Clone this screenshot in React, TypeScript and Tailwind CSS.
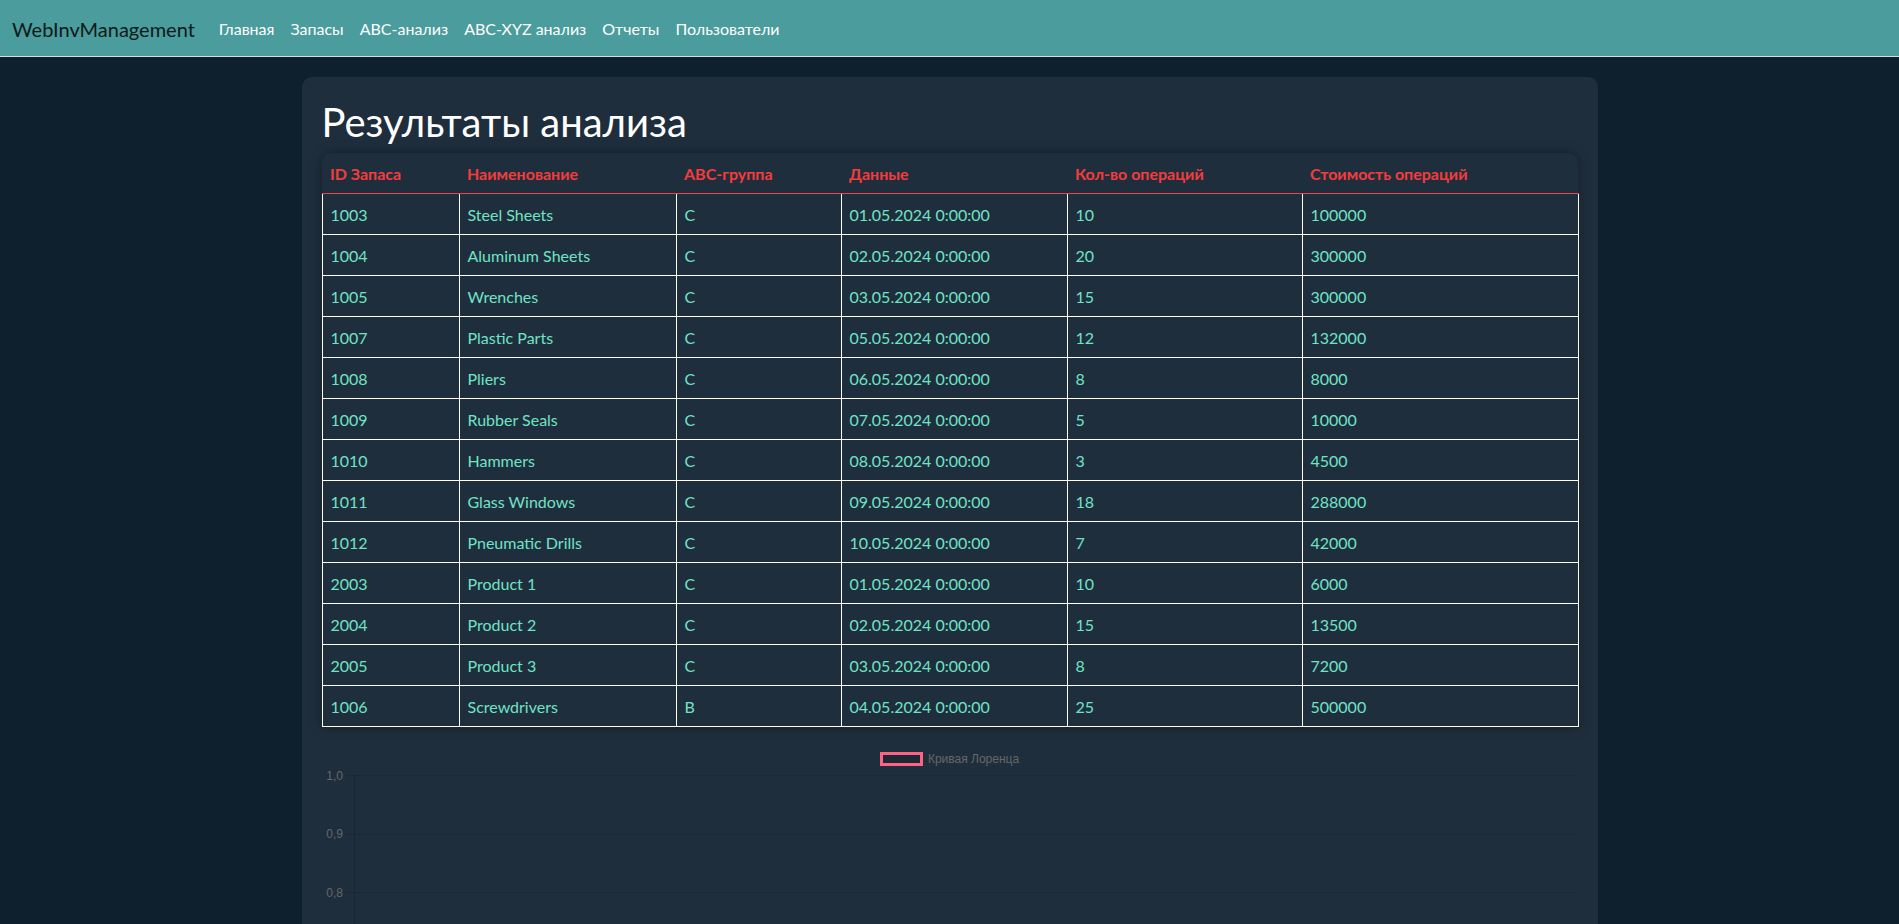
import React from "react";

const navLinks = ["Главная", "Запасы", "ABC-анализ", "ABC-XYZ анализ", "Отчеты", "Пользователи"];

const columns = [
  { label: "ID Запаса", width: 137 },
  { label: "Наименование", width: 217 },
  { label: "ABC-группа", width: 165 },
  { label: "Данные", width: 226 },
  { label: "Кол-во операций", width: 235 },
  { label: "Стоимость операций", width: 276 },
];

const rows = [
  ["1003", "Steel Sheets", "C", "01.05.2024 0:00:00", "10", "100000"],
  ["1004", "Aluminum Sheets", "C", "02.05.2024 0:00:00", "20", "300000"],
  ["1005", "Wrenches", "C", "03.05.2024 0:00:00", "15", "300000"],
  ["1007", "Plastic Parts", "C", "05.05.2024 0:00:00", "12", "132000"],
  ["1008", "Pliers", "C", "06.05.2024 0:00:00", "8", "8000"],
  ["1009", "Rubber Seals", "C", "07.05.2024 0:00:00", "5", "10000"],
  ["1010", "Hammers", "C", "08.05.2024 0:00:00", "3", "4500"],
  ["1011", "Glass Windows", "C", "09.05.2024 0:00:00", "18", "288000"],
  ["1012", "Pneumatic Drills", "C", "10.05.2024 0:00:00", "7", "42000"],
  ["2003", "Product 1", "C", "01.05.2024 0:00:00", "10", "6000"],
  ["2004", "Product 2", "C", "02.05.2024 0:00:00", "15", "13500"],
  ["2005", "Product 3", "C", "03.05.2024 0:00:00", "8", "7200"],
  ["1006", "Screwdrivers", "B", "04.05.2024 0:00:00", "25", "500000"],
];

// y axis ticks of the Lorenz chart, top to bottom
const ticks = ["1,0", "0,9", "0,8", "0,7", "0,6", "0,5", "0,4", "0,3", "0,2", "0,1", "0,0"];

function LorenzChart() {
  const step = 58.5;
  return (
    <div className="mt-4">
      {/* legend */}
      <div className="flex h-8 items-center justify-center gap-[5px] font-['Liberation_Sans',Arial,sans-serif] text-[12px] text-[#666]">
        <span className="h-[14px] w-[43px] border-[3px] border-[#ff6384] bg-black/10" />
        <span>Кривая Лоренца</span>
      </div>
      <svg width="1256" height="600" className="block overflow-visible">
        <line x1="32.5" y1="0" x2="32.5" y2={step * 10} stroke="rgba(0,0,0,0.15)" />
        {ticks.map((t, i) => {
          const y = i * step + 0.5;
          return (
            <g key={t}>
              <line x1="24" y1={y} x2="1256" y2={y} stroke="rgba(0,0,0,0.12)" />
              <text
                x="21"
                y={y + 4}
                textAnchor="end"
                fontSize="12"
                fill="#666"
                fontFamily="'Liberation Sans', Arial, sans-serif"
              >
                {t}
              </text>
            </g>
          );
        })}
      </svg>
    </div>
  );
}

export default function App() {
  return (
    <div className="min-h-screen bg-[#0e1f2d] font-['Lato','Open_Sans',sans-serif]">
      <header className="flex h-[57px] items-center border-b border-[#dcdcdc] bg-[#4b9c9c] px-3 pt-[2px]">
        <span className="mr-4 text-[20px] text-[#0c1a1a]">WebInvManagement</span>
        <nav className="flex">
          {navLinks.map((l) => (
            <a key={l} className="px-2 text-[16px] text-white">
              {l}
            </a>
          ))}
        </nav>
      </header>

      <main className="mx-auto w-[1320px] px-3 pt-5">
        <div className="rounded-[10px] bg-[#1f2e3d] p-5">
          <h1 className="mb-2 pt-[2px] text-[40px] leading-[46px] text-white">Результаты анализа</h1>

          <div className="rounded-t-[10px] shadow-[0_0_12px_rgba(0,0,0,0.35)]">
            <table className="w-full table-fixed border-collapse text-[16px] leading-6">
              <colgroup>
                {columns.map((c) => (
                  <col key={c.label} style={{ width: c.width }} />
                ))}
              </colgroup>
              <thead>
                <tr>
                  {columns.map((c) => (
                    <th
                      key={c.label}
                      className="border-b border-[#e8474a] px-2 pt-[9px] pb-[7px] text-left font-bold text-[#f43c3c]"
                    >
                      {c.label}
                    </th>
                  ))}
                </tr>
              </thead>
              <tbody>
                {rows.map((r) => (
                  <tr key={r[0]}>
                    {r.map((cell, i) => (
                      <td key={i} className="border border-white px-2 pt-[9px] pb-[7px] text-[#6fe3c6]">
                        {cell}
                      </td>
                    ))}
                  </tr>
                ))}
              </tbody>
            </table>
          </div>

          <LorenzChart />
        </div>
      </main>
    </div>
  );
}
